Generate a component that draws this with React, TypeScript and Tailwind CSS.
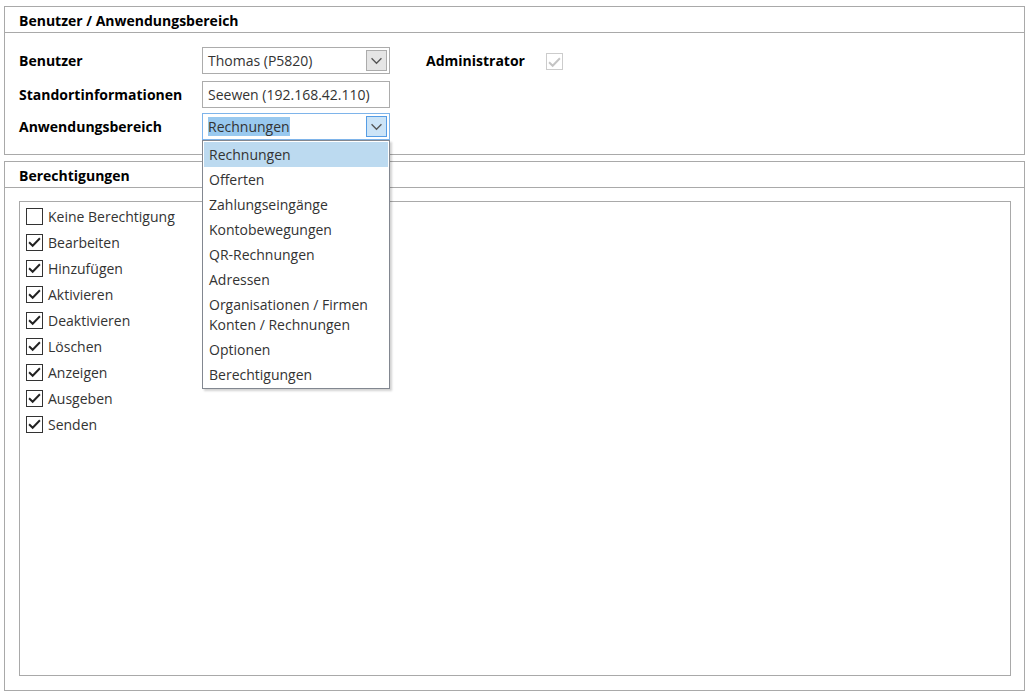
import {FC} from 'react';

const options = [
  'Rechnungen',
  'Offerten',
  'Zahlungseingänge',
  'Kontobewegungen',
  'QR-Rechnungen',
  'Adressen',
  'Organisationen / Firmen\nKonten / Rechnungen',
  'Optionen',
  'Berechtigungen',
];

const rights: [string, boolean][] = [
  ['Keine Berechtigung', false],
  ['Bearbeiten', true],
  ['Hinzufügen', true],
  ['Aktivieren', true],
  ['Deaktivieren', true],
  ['Löschen', true],
  ['Anzeigen', true],
  ['Ausgeben', true],
  ['Senden', true],
];

const Chevron: FC<{className?: string}> = ({className}) => (
  <svg className={className} fill="none" height="8" stroke="currentColor" strokeWidth="1.2" viewBox="0 0 10 6" width="11">
    <path d="M0.5 0.5 L5 5 L9.5 0.5" />
  </svg>
);

const Tick: FC<{className?: string}> = ({className}) => (
  <svg className={className} fill="none" height="12" stroke="currentColor" strokeWidth="1.8" viewBox="0 0 12 10" width="13">
    <path d="M1 5.2 L4.3 8.5 L11 1.5" />
  </svg>
);

const App: FC = () => {
  return (
    <div className="h-[694px] w-[1030px] bg-white pt-[6px] pl-[4px] text-[14px] text-[#333] [font-family:'Open_Sans','Noto_Sans',sans-serif]">
      <section className="w-[1021px] border border-[#a9a9a9]">
        <h2 className="h-[26px] border-b border-[#a9a9a9] pl-[14px] pt-[3px] text-[14px] font-bold text-black">
          Benutzer / Anwendungsbereich
        </h2>
        <div className="flex pl-[14px] pt-[14px]">
          <div className="flex w-[183px] flex-col text-[14px] font-bold text-black">
            <div className="flex h-[27px] items-center">Benutzer</div>
            <div className="mt-[7px] flex h-[27px] items-center">Standortinformationen</div>
            <div className="mt-[5px] flex h-[27px] items-center">Anwendungsbereich</div>
          </div>
          <div className="flex w-[188px] flex-col">
            <div className="flex h-[27px] items-center border border-[#acacac] pl-[5px] pr-[2px]">
              <span className="flex-1">Thomas (P5820)</span>
              <span className="flex h-[21px] w-[21px] items-center justify-center border border-[#acacac] bg-[#e5e5e5] text-[#555]">
                <Chevron />
              </span>
            </div>
            <div className="mt-[7px] flex h-[27px] items-center border border-[#acacac] pl-[5px]">Seewen (192.168.42.110)</div>
            <div className="relative mt-[5px]">
              <div className="flex h-[27px] items-center border border-[#7eb4ea] pl-[5px] pr-[2px]">
                <span className="flex-1">
                  <span className="bg-[#99c9ef] text-[#333]">Rechnungen</span>
                </span>
                <span className="flex h-[21px] w-[21px] items-center justify-center border border-[#569de5] bg-[#cce4f7] text-[#555]">
                  <Chevron />
                </span>
              </div>
              <ul className="absolute left-0 top-[27px] z-10 w-[188px] border border-[#828790] bg-white p-px leading-[20px] shadow-[2px_2px_2px_rgba(0,0,0,0.18)]">
                {options.map((opt, i) => (
                  <li
                    className={
                      i === 0
                        ? 'whitespace-pre bg-[#bcdaf0] px-[5px] pb-[2px] pt-[3px]'
                        : 'whitespace-pre px-[5px] pb-[2px] pt-[3px]'
                    }
                    key={opt}>
                    {opt}
                  </li>
                ))}
              </ul>
            </div>
          </div>
          <div className="ml-[36px] flex h-[27px] items-center text-[14px] font-bold text-black">Administrator</div>
          <div className="ml-[21px] mt-[6px] flex h-[17px] w-[17px] items-center justify-center border border-[#cccccc] text-[#c4c4c4]">
            <Tick />
          </div>
        </div>
        <div className="h-[14px]" />
      </section>
      <section className="mt-[6px] w-[1021px] border border-[#a9a9a9]">
        <h2 className="h-[26px] border-b border-[#a9a9a9] pl-[14px] pt-[3px] text-[14px] font-bold text-black">Berechtigungen</h2>
        <div className="px-[14px] pb-[14px] pt-[13px]">
          <div className="h-[475px] w-[992px] border border-[#a9a9a9] pl-[6px] pt-[1px]">
            {rights.map(([label, checked]) => (
              <div className="flex h-[26px] items-center" key={label}>
                <span className="flex h-[17px] w-[17px] items-center justify-center border border-[#333] bg-white text-[#222]">
                  {checked && <Tick />}
                </span>
                <span className="ml-[5px]">{label}</span>
              </div>
            ))}
          </div>
        </div>
      </section>
    </div>
  );
};

export default App;
